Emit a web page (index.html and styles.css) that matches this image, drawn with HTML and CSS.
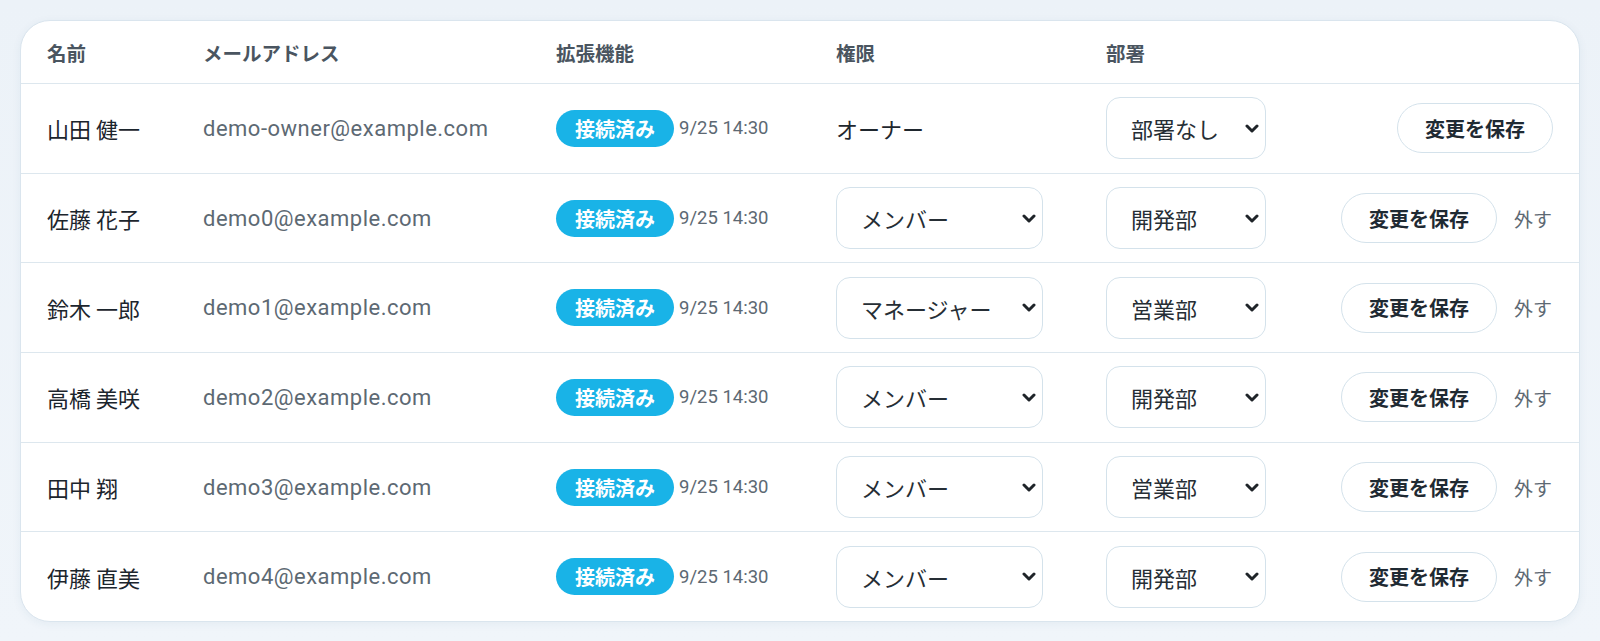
FILE: index.html
```html
<!DOCTYPE html>
<html lang="ja">
<head>
<meta charset="utf-8">
<title>メンバー</title>
<link rel="stylesheet" href="styles.css">
</head>
<body>
<div class="card">
  <div class="row head">
    <div>名前</div>
    <div>メールアドレス</div>
    <div>拡張機能</div>
    <div>権限</div>
    <div>部署</div>
    <div></div>
  </div>

  <div class="row">
    <div class="name">山田 健一</div>
    <div class="email">demo-owner@example.com</div>
    <div class="ext"><span class="badge">接続済み</span><span class="date">9/25 14:30</span></div>
    <div class="role">オーナー</div>
    <div><div class="select dept"><span>部署なし</span><svg class="chev" viewBox="0 0 14 9"><path d="M2 2 L7 7 L12 2"/></svg></div></div>
    <div class="actions"><button class="save">変更を保存</button></div>
  </div>

  <div class="row">
    <div class="name">佐藤 花子</div>
    <div class="email">demo0@example.com</div>
    <div class="ext"><span class="badge">接続済み</span><span class="date">9/25 14:30</span></div>
    <div><div class="select roles"><span>メンバー</span><svg class="chev" viewBox="0 0 14 9"><path d="M2 2 L7 7 L12 2"/></svg></div></div>
    <div><div class="select dept"><span>開発部</span><svg class="chev" viewBox="0 0 14 9"><path d="M2 2 L7 7 L12 2"/></svg></div></div>
    <div class="actions"><button class="save">変更を保存</button><span class="remove">外す</span></div>
  </div>

  <div class="row">
    <div class="name">鈴木 一郎</div>
    <div class="email">demo1@example.com</div>
    <div class="ext"><span class="badge">接続済み</span><span class="date">9/25 14:30</span></div>
    <div><div class="select roles"><span>マネージャー</span><svg class="chev" viewBox="0 0 14 9"><path d="M2 2 L7 7 L12 2"/></svg></div></div>
    <div><div class="select dept"><span>営業部</span><svg class="chev" viewBox="0 0 14 9"><path d="M2 2 L7 7 L12 2"/></svg></div></div>
    <div class="actions"><button class="save">変更を保存</button><span class="remove">外す</span></div>
  </div>

  <div class="row">
    <div class="name">高橋 美咲</div>
    <div class="email">demo2@example.com</div>
    <div class="ext"><span class="badge">接続済み</span><span class="date">9/25 14:30</span></div>
    <div><div class="select roles"><span>メンバー</span><svg class="chev" viewBox="0 0 14 9"><path d="M2 2 L7 7 L12 2"/></svg></div></div>
    <div><div class="select dept"><span>開発部</span><svg class="chev" viewBox="0 0 14 9"><path d="M2 2 L7 7 L12 2"/></svg></div></div>
    <div class="actions"><button class="save">変更を保存</button><span class="remove">外す</span></div>
  </div>

  <div class="row">
    <div class="name">田中 翔</div>
    <div class="email">demo3@example.com</div>
    <div class="ext"><span class="badge">接続済み</span><span class="date">9/25 14:30</span></div>
    <div><div class="select roles"><span>メンバー</span><svg class="chev" viewBox="0 0 14 9"><path d="M2 2 L7 7 L12 2"/></svg></div></div>
    <div><div class="select dept"><span>営業部</span><svg class="chev" viewBox="0 0 14 9"><path d="M2 2 L7 7 L12 2"/></svg></div></div>
    <div class="actions"><button class="save">変更を保存</button><span class="remove">外す</span></div>
  </div>

  <div class="row">
    <div class="name">伊藤 直美</div>
    <div class="email">demo4@example.com</div>
    <div class="ext"><span class="badge">接続済み</span><span class="date">9/25 14:30</span></div>
    <div><div class="select roles"><span>メンバー</span><svg class="chev" viewBox="0 0 14 9"><path d="M2 2 L7 7 L12 2"/></svg></div></div>
    <div><div class="select dept"><span>開発部</span><svg class="chev" viewBox="0 0 14 9"><path d="M2 2 L7 7 L12 2"/></svg></div></div>
    <div class="actions"><button class="save">変更を保存</button><span class="remove">外す</span></div>
  </div>
</div>
</body>
</html>
```

FILE: styles.css
```css
* { box-sizing: border-box; }

html, body { margin: 0; }

body {
  padding: 20px;
  min-height: 100vh;
  background: linear-gradient(180deg, #ecf2f8 0%, #f0f5fa 100%);
  font-family: Roboto, "Noto Sans CJK JP", sans-serif;
  color: #1e2830;
}

.card {
  width: 1560px;
  background: #ffffff;
  border: 1px solid #dae5ee;
  border-radius: 30px;
  box-shadow: 0 2px 10px rgba(40, 80, 120, 0.06);
  overflow: hidden;
}

.row {
  display: grid;
  grid-template-columns: 156px 353px 280px 270px 160px 1fr;
  align-items: center;
  padding: 0 26px 0 26px;
  height: 89.7px;
  border-bottom: 1px solid #dde7ee;
}

.row:last-child { border-bottom: none; height: 88.7px; }

.row.head {
  height: 63px;
  font-family: "Noto Sans CJK JP", sans-serif;
  font-weight: 700;
  font-size: 19.5px;
  color: #4a5560;
}

.name {
  font-family: "Noto Sans CJK JP", sans-serif;
  font-size: 22px;
  color: #1c252d;
}

.email {
  font-family: Roboto, sans-serif;
  font-size: 22px;
  letter-spacing: 0.5px;
  color: #5d6973;
}

.ext {
  display: flex;
  align-items: center;
  gap: 5px;
}

.badge {
  display: inline-flex;
  align-items: center;
  height: 37px;
  padding: 0 19px;
  border-radius: 19px;
  background: #19b3e7;
  color: #ffffff;
  font-family: "Noto Sans CJK JP", sans-serif;
  font-weight: 700;
  font-size: 20px;
}

.date {
  font-family: Roboto, sans-serif;
  font-size: 18.5px;
  color: #5d6973;
}

.role {
  font-family: "Noto Sans CJK JP", sans-serif;
  font-size: 22px;
  color: #1f272e;
}

.select {
  display: flex;
  align-items: center;
  justify-content: space-between;
  height: 62px;
  padding: 0 6px 0 24px;
  border: 1.5px solid #d4e2eb;
  border-radius: 14px;
  background: #ffffff;
  font-family: "Noto Sans CJK JP", sans-serif;
  font-size: 22px;
  color: #262e35;
}

.select.roles { width: 207px; }
.select.dept { width: 160px; }

.chev {
  width: 14px;
  height: 9px;
  fill: none;
  stroke: #1f2429;
  stroke-width: 3;
  stroke-linecap: round;
  stroke-linejoin: round;
}

.actions {
  display: flex;
  align-items: center;
  justify-content: flex-end;
  gap: 17px;
}

.save {
  height: 50px;
  padding: 0 27px;
  border: 1.5px solid #d4e2eb;
  border-radius: 25px;
  background: #ffffff;
  font-family: "Noto Sans CJK JP", sans-serif;
  font-weight: 700;
  font-size: 20px;
  color: #1f2a33;
  cursor: pointer;
}

.remove {
  font-family: "Noto Sans CJK JP", sans-serif;
  font-size: 19px;
  color: #5d6973;
  padding-right: 1px;
}
```
